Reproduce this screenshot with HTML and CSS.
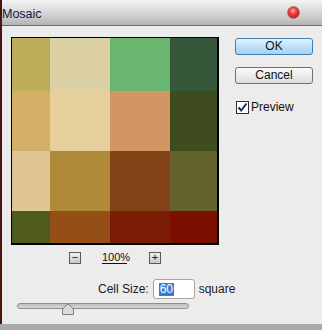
FILE: index.html
```html
<!DOCTYPE html>
<html lang="en">
<head>
  <meta charset="UTF-8">
  <title>Mosaic</title>
  <link rel="stylesheet" href="styles.css">
</head>
<body>
  <div class="window">
    <div class="titlebar">
      <span class="title">Mosaic</span>
      <span class="close"></span>
    </div>

    <div class="content">
      <div class="left">
        <div class="preview">
          <div></div><div></div><div></div><div></div>
          <div></div><div></div><div></div><div></div>
          <div></div><div></div><div></div><div></div>
          <div></div><div></div><div></div><div></div>
        </div>

        <div class="zoom">
          <span class="zbtn">&minus;</span>
          <span class="zpct">100%</span>
          <span class="zbtn">+</span>
        </div>

        <div class="cellsize">
          <span class="lbl">Cell Size:</span>
          <span class="field"><span class="sel">60</span></span>
          <span class="unit">square</span>
        </div>

        <div class="slider">
          <div class="track"></div>
          <div class="thumb">
            <svg width="12" height="12" viewBox="0 0 12 12">
              <path d="M0.5 11.5 V6 L6 0.8 L11.5 6 V11.5 Z" fill="#dcdcdc" stroke="#7a7a7a"/>
            </svg>
          </div>
        </div>
      </div>

      <div class="right">
        <button class="btn ok">OK</button>
        <button class="btn">Cancel</button>
        <label class="check">
          <span class="box">
            <svg width="11" height="11" viewBox="0 0 11 11">
              <path d="M1.5 5.5 L4.2 8.5 L9.5 1.5" fill="none" stroke="#1d2b5e" stroke-width="2"/>
            </svg>
          </span>
          Preview
        </label>
      </div>
    </div>
  </div>
  <div class="taskbar"></div>
</body>
</html>
```

FILE: styles.css
```css
body {
  margin: 0;
  background: #4a1410;
  font-family: 'Liberation Sans', Arial, sans-serif;
  font-size: 12px;
  color: #111;
}

.window {
  margin-left: 2px;
  height: 324px;
  background: #ececec;
}

.titlebar {
  height: 25px;
  border-bottom: 1px solid #6e6e6e;
  background: linear-gradient(#f4f4f4, #d4d4d4 55%, #b4b4b4);
  display: flex;
  align-items: center;
  justify-content: space-between;
}

.title {
  font-size: 12.5px;
  color: #151538;
  margin-top: 2px;
}

.close {
  width: 11px;
  height: 11px;
  margin-right: 22px;
  border-radius: 50%;
  border: 1px solid #9a7a7a;
  background: radial-gradient(circle at 45% 35%, #ffb0b0 0, #f24040 35%, #c80c0c 80%);
}

.content {
  display: flex;
}

.left {
  padding: 11px 0 0 9px;
  width: 210px;
  flex-shrink: 0;
}

.preview {
  display: grid;
  grid-template-columns: 38px 60px 60px 47px;
  grid-template-rows: 53px 60px 60px 32px;
  width: 205px;
  border: 1px solid #000;
  border-width: 1px 2px 2px 1px;
}

.preview div:nth-child(1) { background: #bcad5a; }
.preview div:nth-child(2) { background: #dcd1a5; }
.preview div:nth-child(3) { background: #6ab56f; }
.preview div:nth-child(4) { background: #36573a; }
.preview div:nth-child(5) { background: #d4b067; }
.preview div:nth-child(6) { background: #e6cf9b; }
.preview div:nth-child(7) { background: #d29563; }
.preview div:nth-child(8) { background: #3f4c1d; }
.preview div:nth-child(9) { background: #e0c594; }
.preview div:nth-child(10) { background: #ae8a39; }
.preview div:nth-child(11) { background: #824416; }
.preview div:nth-child(12) { background: #63622b; }
.preview div:nth-child(13) { background: #4f5b1d; }
.preview div:nth-child(14) { background: #944f17; }
.preview div:nth-child(15) { background: #7b1c04; }
.preview div:nth-child(16) { background: #7b0f00; }

.zoom {
  display: flex;
  align-items: center;
  margin: 6px 0 0 58px;
  height: 13px;
}

.zbtn {
  width: 10px;
  height: 10px;
  border: 1px solid #5a5a5a;
  background: linear-gradient(#f2f2f2, #c8c8c8);
  font-size: 11px;
  line-height: 9px;
  text-align: center;
  color: #222;
}

.zpct {
  margin: 0 22px 0 21px;
  font-size: 11px;
  width: 25px;
  border-bottom: 1px solid #111;
  line-height: 12px;
}

.cellsize {
  display: flex;
  align-items: center;
  margin: 15px 0 0 87px;
  white-space: nowrap;
  width: 160px;
}

.cellsize > span {
  flex-shrink: 0;
}

.lbl {
  color: #1a1a2a;
}

.field {
  width: 42px;
  height: 20px;
  margin: 0 4px 0 4px;
  border: 1px solid #a4a4a4;
  border-radius: 3px;
  background: #fff;
  display: flex;
  align-items: center;
  padding-left: 5px;
  box-sizing: border-box;
}

.sel {
  background: #3a7ad4;
  color: #fff;
  padding: 0 1px;
  line-height: 13px;
}

.unit {
  color: #1a1a2a;
}

.slider {
  position: relative;
  height: 12px;
  margin: 2px 0 0 6px;
}

.track {
  width: 170px;
  height: 4px;
  margin-top: 4px;
  border: 1px solid #8e8e8e;
  border-radius: 3px;
  background: linear-gradient(#bdbdbd, #d8d8d8);
}

.thumb {
  position: absolute;
  left: 45px;
  top: 0;
  line-height: 0;
}

.right {
  padding: 12px 0 0 14px;
  display: flex;
  flex-direction: column;
}

.btn {
  width: 78px;
  height: 17px;
  padding: 0;
  font-family: inherit;
  font-size: 12px;
  line-height: 15px;
  color: #111;
  border: 1px solid #707070;
  border-radius: 3px;
  background: linear-gradient(#fbfbfb, #ececec 50%, #dcdcdc);
  margin-bottom: 12px;
}

.btn.ok {
  border-color: #3c7fb1;
  background: linear-gradient(#e6f3fc, #bfe0f8 50%, #a6d3f4);
}

.check {
  display: flex;
  align-items: center;
  margin: 4px 0 0 1px;
}

.box {
  width: 11px;
  height: 11px;
  border: 1px solid #2c2c2c;
  background: #fff;
  margin-right: 2px;
  line-height: 0;
}

.taskbar {
  height: 6px;
  background: #a9a9a9;
}
```
